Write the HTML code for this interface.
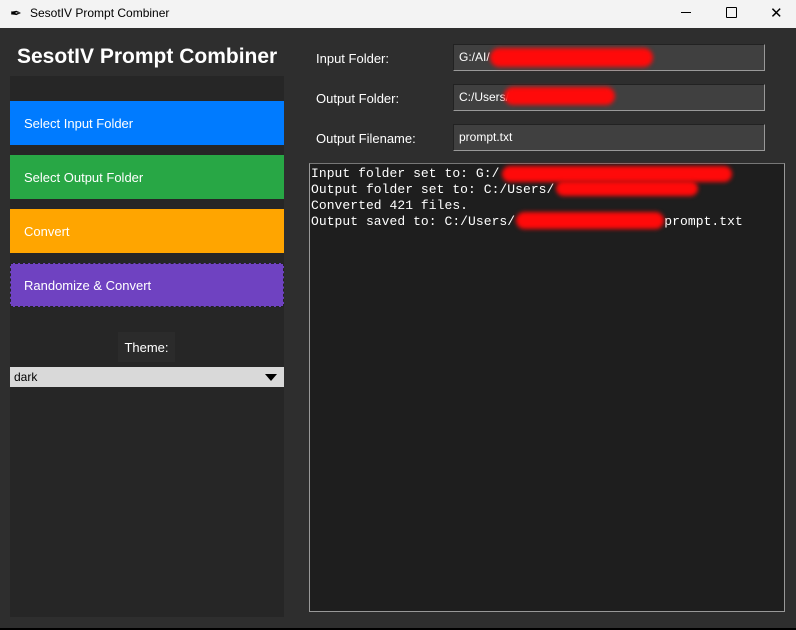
<!DOCTYPE html>
<html><head><style>
body{margin:0;width:796px;height:630px;background:#2e2e2e;position:relative;overflow:hidden;font-family:"Liberation Sans",sans-serif}
.a{position:absolute}
.tb{left:0;top:0;width:796px;height:28px;background:#f3f3f3;font-size:12px;color:#000}
.btn{left:10px;width:274px;height:44px;color:#fff;font-size:13px;line-height:46px;padding-left:14px;box-sizing:border-box}
.lbl{color:#fff;font-size:13px;left:316px}
.en{left:453px;width:312px;height:27px;background:#404040;border:1px solid #222;border-bottom-color:#999;border-right-color:#999;box-sizing:border-box;color:#fff;font-size:12px;line-height:25px;padding-left:5px}
.red{background:#ff0a0a;border-radius:10px;filter:blur(2px)}
.log{left:309px;top:163px;width:476px;height:449px;background:#1e1e1e;border:1px solid #999;border-top-color:#777;box-sizing:border-box;color:#fff;font-family:"Liberation Mono",monospace;font-size:13px;line-height:16px;padding:2px 0 0 1px;white-space:pre;letter-spacing:0.05px}
</style></head><body>
<div class="a tb"><span class="a" style="left:10px;top:5px;font-size:14px">&#10002;</span><span class="a" style="left:30px;top:6px">SesotIV Prompt Combiner</span>
<span class="a" style="left:681px;top:12px;width:10px;height:1px;background:#000"></span>
<span class="a" style="left:726px;top:7px;width:9px;height:9px;border:1px solid #000;border-radius:1px"></span>
<span class="a" style="left:770px;top:4px;font-size:15px">&#10005;</span></div>
<div class="a" style="left:17px;top:45px;color:#fff;font-weight:bold;font-size:21px">SesotIV Prompt Combiner</div>
<div class="a" style="left:10px;top:76px;width:274px;height:541px;background:#262626"></div>
<div class="a btn" style="top:101px;background:#007bff">Select Input Folder</div>
<div class="a btn" style="top:155px;background:#28a745">Select Output Folder</div>
<div class="a btn" style="top:209px;background:#ffa500">Convert</div>
<div class="a btn" style="top:263px;background:#6f42c1;border:1px dashed #222;outline:2px solid #6f42c1;outline-offset:-3px;line-height:44px;padding-left:13px"><span>Randomize &amp; Convert</span></div>
<div class="a" style="left:118px;top:332px;width:57px;height:30px;background:#2b2b2b;color:#fff;font-size:13px;line-height:31px;text-align:center">Theme:</div>
<div class="a" style="left:10px;top:367px;width:274px;height:20px;background:#d9d9d9;font-size:12px;line-height:21px;padding-left:4px;box-sizing:border-box">dark<span class="a" style="right:7px;top:7px;width:0;height:0;border-left:6px solid transparent;border-right:6px solid transparent;border-top:7px solid #000"></span></div>
<div class="a lbl" style="top:51px">Input Folder:</div>
<div class="a lbl" style="top:91px">Output Folder:</div>
<div class="a lbl" style="top:131px">Output Filename:</div>
<div class="a en" style="top:44px">G:/AI/</div>
<div class="a en" style="top:84px">C:/Users/</div>
<div class="a en" style="top:124px">prompt.txt</div>
<div class="a red" style="left:490px;top:48px;width:163px;height:19px"></div>
<div class="a red" style="left:504px;top:87px;width:111px;height:18px"></div>
<div class="a log">Input folder set to: G:/
Output folder set to: C:/Users/
Converted 421 files.
Output saved to: C:/Users/                   prompt.txt</div>
<div class="a red" style="left:502px;top:166px;width:230px;height:16px"></div>
<div class="a red" style="left:556px;top:181px;width:142px;height:15px"></div>
<div class="a red" style="left:516px;top:212px;width:148px;height:17px"></div>
<div class="a" style="left:0;top:628px;width:796px;height:2px;background:#000"></div>
</body></html>
